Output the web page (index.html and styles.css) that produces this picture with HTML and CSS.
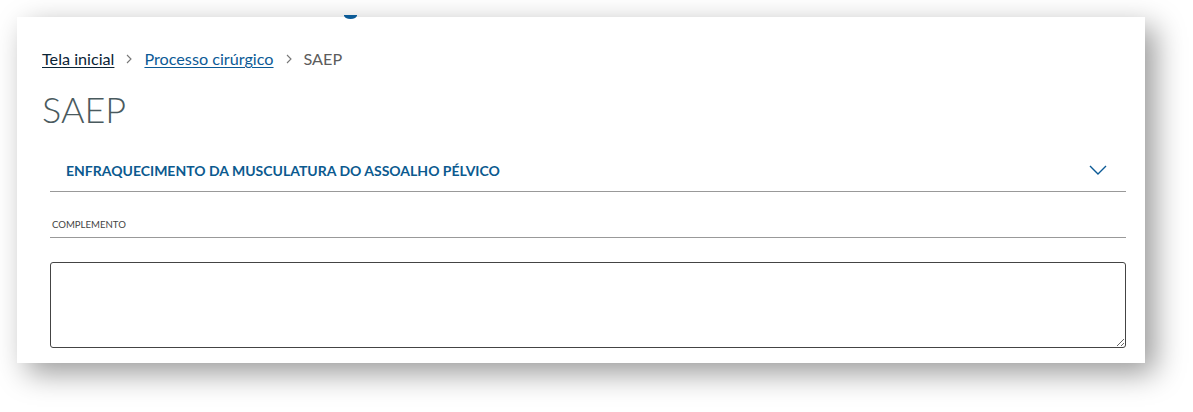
FILE: index.html
```html
<!DOCTYPE html>
<html lang="pt-BR">
<head>
  <meta charset="UTF-8" />
  <meta name="viewport" content="width=device-width, initial-scale=1.0" />
  <title>SAEP</title>
  <link rel="stylesheet" href="styles.css">
</head>
<body>
  <div class="card">
    <span class="clipped-glyph"></span>

    <!-- breadcrumb -->
    <nav class="breadcrumb">
      <a class="crumb home" href="#">Tela inicial</a>
      <svg class="sep" width="6" height="10" viewBox="0 0 6 10"><path d="M1 1 L5 5 L1 9" fill="none" stroke="#777" stroke-width="1.1"/></svg>
      <a class="crumb" href="#">Processo cirúrgico</a>
      <svg class="sep" width="6" height="10" viewBox="0 0 6 10"><path d="M1 1 L5 5 L1 9" fill="none" stroke="#777" stroke-width="1.1"/></svg>
      <span class="current">SAEP</span>
    </nav>

    <h1 class="page-title">SAEP</h1>

    <div class="form">
      <!-- accordion -->
      <div class="accordion-head">
        <span class="accordion-title">ENFRAQUECIMENTO DA MUSCULATURA DO ASSOALHO PÉLVICO</span>
        <svg class="chevron" width="18" height="10" viewBox="0 0 18 10">
          <path d="M1 1 L9 9 L17 1" fill="none" stroke="#0b5a96" stroke-width="1.4"/>
        </svg>
      </div>

      <div class="field-label">COMPLEMENTO</div>
      <textarea class="field-text"></textarea>
    </div>
  </div>
</body>
</html>
```

FILE: styles.css
```css
*{box-sizing:border-box}
body{
  margin:0;
  background:#fff;
  font-family:'Lato','Open Sans',sans-serif;
  padding:17px 48px 49px 17px;
}
.card{
  position:relative;
  background:#fff;
  height:346px;
  padding:0 19px 0 25px;
  box-shadow:10px 10px 28px rgba(0,0,0,.4);
}

/* bottom of a glyph from the header above, cut by the card */
.clipped-glyph{
  position:absolute;
  top:-2px;
  left:327px;
  width:13px;
  height:4px;
  background:#0b5a96;
  border-radius:0 0 7px 7px / 0 0 4px 4px;
}

.breadcrumb{display:flex;align-items:center;gap:12px;padding-top:31px;font-size:16.2px;line-height:22px}
.crumb{color:#0b5a96;text-decoration:underline;text-underline-offset:2px}
.crumb.home{color:#0b2436}
.sep{display:block}
.current{color:#5c5c5c}

.page-title{margin:17px 0 0;font-size:36px;font-weight:300;color:#4a5a5e;line-height:44px}

.form{margin-left:8px;margin-top:18px}
.accordion-head{
  display:flex;
  align-items:center;
  justify-content:space-between;
  height:43px;
  padding:0 19px 0 16px;
  border-bottom:1px solid #999;
}
.accordion-title{font-size:14px;font-weight:700;color:#0b5a8f}
.chevron{display:block}

.field-label{
  margin-top:27px;
  padding:0 2px 7px;
  font-size:9.6px;
  color:#444;
  border-bottom:1px solid #999;
}
.field-text{
  display:block;
  width:100%;
  height:86px;
  margin-top:24px;
  border:1px solid #444;
  border-radius:3px;
  font-family:inherit;
}
```
